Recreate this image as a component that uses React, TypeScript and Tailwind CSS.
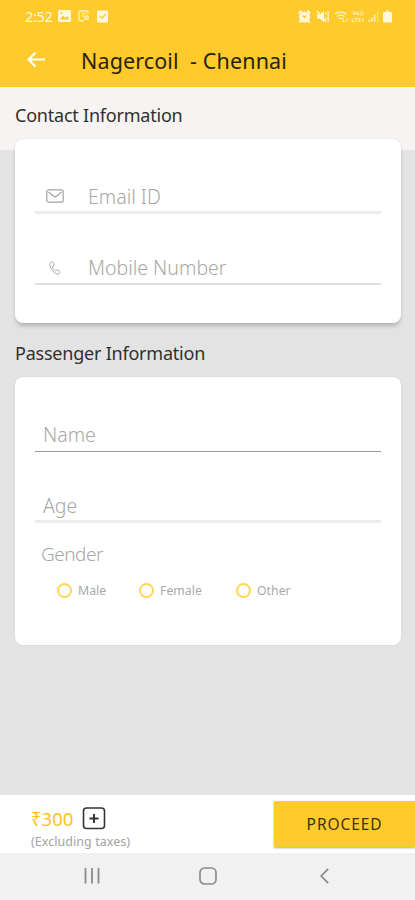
import type { ReactNode } from 'react'

function StatusBar() {
  return (
    <div className="flex h-8 items-center pl-[25px] pr-[23px] text-[#fff8dc]">
      <span className="w-[33px] whitespace-nowrap text-[14.5px] leading-5 tracking-[-0.3px]">2:52</span>
      <svg width="13" height="12" viewBox="0 0 13 12" fill="none">
        <rect width="13" height="12" rx="1.5" fill="#fff8dc" />
        <path d="M2 9.5l3-4 2.2 2.5L9 6l2.3 3.5z" fill="#ffca2c" />
        <circle cx="3.5" cy="3.3" r="1" fill="#ffca2c" />
      </svg>
      <svg className="ml-[7px]" width="12" height="12" viewBox="0 0 12 12" fill="none" stroke="#fff0b5" strokeWidth="1.4">
        <path d="M6 10.8H2.5A1.5 1.5 0 011 9.3V2.5A1.5 1.5 0 012.5 1h6A1.5 1.5 0 0110 2.5V4M3.5 3.5h4M3.5 6h2" />
        <circle cx="8.5" cy="7.5" r="2.6" fill="#fff0b5" stroke="none" />
        <path d="M7.2 7.5l1 1L10 6.5" stroke="#ffca2c" strokeWidth="1" />
      </svg>
      <svg className="ml-[7px]" width="11" height="13" viewBox="0 0 11 13" fill="none">
        <rect y="0.5" width="11" height="12" rx="1" fill="#fff8dc" />
        <path d="M2.7 6l2.3 2.3L8.6 4.2" stroke="#ffca2c" strokeWidth="1.4" />
      </svg>
      <div className="ml-auto flex items-center">
        <svg width="13" height="13" viewBox="0 0 13 13" fill="none">
          <circle cx="6.5" cy="7" r="5.5" fill="#fff8dc" />
          <path d="M0.8 3.4L3.3 0.8M12.2 3.4L9.7 0.8M2.8 11l-1.3 1.5M10.2 11l1.3 1.5" stroke="#fff8dc" strokeWidth="2" />
          <path d="M4.5 5.5L6.5 7.500l2-2" stroke="#ffca2c" strokeWidth="1.3" />
        </svg>
        <svg className="ml-[5px]" width="13" height="13" viewBox="0 0 13 13" fill="none" stroke="#fff8dc">
          <path d="M1 4.5h2.5L8 1v11L3.5 8.5H1z" fill="#fff8dc" stroke="none" />
          <path d="M1 1l9 11" strokeWidth="1.3" />
          <path d="M10 2v3M10 7v3M12.2 1v11" strokeWidth="1.1" />
        </svg>
        <svg className="ml-[5px]" width="15" height="13" viewBox="0 0 15 13" fill="none" stroke="#fff0b5" strokeWidth="1.5">
          <path d="M1 4.2a9 9 0 0111.5 0M3 6.6a6 6 0 017.5 0M5 8.8a3 3 0 013.5 0" />
          <path d="M9.5 8v4M8 10.5l1.5 1.5L11 10.5M13 12V8" strokeWidth="0.9" />
        </svg>
        <div className="-my-1 ml-px w-[16px] text-center text-[6px] leading-[8px] font-bold tracking-[-0.1px] text-[#fff0b5]">
          <div className="whitespace-nowrap">Vo))</div>
          <div className="-mt-px whitespace-nowrap">LTE1</div>
        </div>
        <svg className="ml-[2px]" width="11" height="12" viewBox="0 0 11 12" stroke="#fff0b5" strokeWidth="1.5">
          <path d="M1 12V9.5M3.8 12V7.5M6.6 12V4.5" />
          <path d="M9.6 12V1" strokeOpacity="0.5" />
        </svg>
        <svg className="ml-1" width="9" height="13" viewBox="0 0 9 13" fill="#fff8dc">
          <path d="M3 0.5h3V2h1.5A1.3 1.3 0 019 3.3v7.9a1.3 1.3 0 01-1.3 1.3H1.3A1.3 1.3 0 010 11.2V3.3A1.3 1.3 0 011.3 2H3z" />
        </svg>
      </div>
    </div>
  )
}

function Header() {
  return (
    <header className="h-[87px] bg-[#ffca2c]">
      <StatusBar />
      <div className="flex h-14 items-center pl-[27px]">
        <svg width="18" height="18" viewBox="0 0 18 18" fill="none" stroke="#fff" strokeWidth="2.2">
          <path d="M18 8.5H1.5M8.5 1.5L1.5 8.5l7 7" />
        </svg>
        <h1 className="ml-9 whitespace-pre pt-px text-[21.5px] leading-6 tracking-[0.12px] text-[#2a230c]">Nagercoil  - Chennai</h1>
      </div>
    </header>
  )
}

type FieldProps = {
  label: string
  icon?: ReactNode
  className: string
}

function Field({ label, icon, className }: FieldProps) {
  return (
    <label className={`flex items-center text-[19.5px] leading-7 font-light text-[#a8a8a8] ${className}`}>
      {icon && <span className="flex w-[45px] pl-[3px]">{icon}</span>}
      <span className="whitespace-nowrap">{label}</span>
    </label>
  )
}

function MailIcon() {
  return (
    <svg className="-mt-[2px]" width="18" height="14" viewBox="0 0 18 14" fill="none" stroke="#a3a3a3" strokeWidth="1.2">
      <rect x="0.8" y="0.8" width="16.4" height="12.4" rx="2" />
      <path d="M2.5 3l5.200 4.300a2 2 0 002.600 0L15.500 3" />
    </svg>
  )
}

function PhoneIcon() {
  return (
    <svg className="-mt-px ml-[3px]" width="12" height="14" viewBox="0 0 12 14" fill="none" stroke="#acacac" strokeWidth="1">
      <path d="M2.2 1C.8 1.6.4 3 .9 4.8c.9 3.3 3.1 6.2 6 7.8 1.6.9 3.1.7 4-.7.4-.6.3-1.2-.3-1.6L8.8 9c-.6-.4-1.1-.3-1.5.2l-.7.7C5 8.9 3.9 7.5 3.4 5.7l1-.4c.6-.3.8-.7.6-1.3l-.7-2.2C4 1 3.2.6 2.2 1z" />
    </svg>
  )
}

function Radio({ label, className }: { label: string; className: string }) {
  return (
    <label className={`flex items-center gap-1.5 ${className}`}>
      <span className="size-[15px] rounded-full border-2 border-[#ffd657]" />
      <span className="whitespace-nowrap pt-[2px] text-[12.3px] leading-4 text-[#a9a9a9]">{label}</span>
    </label>
  )
}

export default function App() {
  return (
    <div className="flex h-[900px] w-[415px] flex-col overflow-hidden bg-[#e3e3e3] font-['Noto_Sans',sans-serif]">
      <Header />

      <main className="flex-1">
        <div className="h-[63px] bg-[#f7f3f2] pl-[15px] pt-[14px]">
          <h2 className="whitespace-nowrap text-[18px] leading-7 tracking-[-0.22px] text-[#303030]">Contact Information</h2>
        </div>
        <section className="relative mr-[14px] -mt-[11px] ml-[15px] h-[184px] rounded-lg bg-white px-5 pt-[32px] shadow-[0_4px_4px_-1px_rgba(0,0,0,0.2),0_0_2px_rgba(0,0,0,0.12)]">
          <Field label="Email ID" icon={<MailIcon />} className="h-[43px] border-b-[3px] border-[#ececec] pl-[8px] pt-[11px]" />
          <Field label="Mobile Number" icon={<PhoneIcon />} className="mt-[28px] h-[43px] border-b-2 border-[#dedede] pl-[8px] pt-[11px]" />
        </section>

        <h2 className="mt-4 pl-[15px] whitespace-nowrap text-[18px] leading-7 tracking-[-0.22px] text-[#303030]">Passenger Information</h2>
        <section className="mr-[14px] ml-[15px] mt-[10px] h-[268px] rounded-lg bg-white px-5 pt-[32px] shadow-[0_0_2px_rgba(0,0,0,0.1)]">
          <Field label="Name" className="h-[43px] border-b border-[#9b9b9b] pl-2 pt-[9px]" />
          <Field label="Age" className="mt-[27px] h-[44px] border-b-[3px] border-[#ececec] pl-2 pt-[13px]" />
          <div className="mt-[17px] pl-[6px] text-[19px] leading-7 font-light tracking-[-0.5px] text-[#a8a8a8]">Gender</div>
          <div className="mt-3.5 flex h-4 items-center pl-[22px]">
            <Radio label="Male" className="w-[82px]" />
            <Radio label="Female" className="w-[97px]" />
            <Radio label="Other" className="w-[60px]" />
          </div>
        </section>
      </main>

      <div className="flex h-[58px] bg-white">
        <div className="w-[274px] pl-[31px] pt-[12px]">
          <div className="flex h-[23px] items-center">
            <span className="w-[51px] text-[18.5px] leading-6 text-[#fcc21b]">₹300</span>
            <svg width="24" height="23" viewBox="0 0 24 23" fill="none" stroke="#333">
              <rect x="1.5" y="1" width="21" height="20.5" rx="3" strokeWidth="1.6" />
              <path d="M12 7v9M7.5 11.5h9" strokeWidth="1.9" />
            </svg>
          </div>
          <div className="mt-1 whitespace-nowrap text-[12.5px] leading-4 tracking-[0.05px] text-[#a3a3a3]">(Excluding taxes)</div>
        </div>
        <button className="mt-1.5 h-[46px] w-[141px] bg-[#ffca2c] pt-[2px] text-[15.5px] tracking-[0.9px] text-[#3c320d] shadow-[0_1px_2px_rgba(0,0,0,0.35)]">
          PROCEED
        </button>
      </div>

      <nav className="flex h-[47px] items-center bg-[#f1f1f1] pl-[84px] pb-px text-[#8b8b8b]">
        <svg width="16" height="16" viewBox="0 0 16 16" stroke="currentColor" strokeWidth="1.8">
          <path d="M1.5 0v15.5M8 0v15.5M14.5 0v15.5" />
        </svg>
        <svg className="ml-[99px]" width="18" height="18" viewBox="0 0 18 18" fill="none" stroke="currentColor" strokeWidth="1.7">
          <rect x="1" y="1" width="16" height="16" rx="4.5" />
        </svg>
        <svg className="ml-[103px]" width="9" height="16" viewBox="0 0 9 16" fill="none" stroke="currentColor" strokeWidth="1.7">
          <path d="M8.2 0.8L1.2 8l7 7.2" />
        </svg>
      </nav>
    </div>
  )
}
